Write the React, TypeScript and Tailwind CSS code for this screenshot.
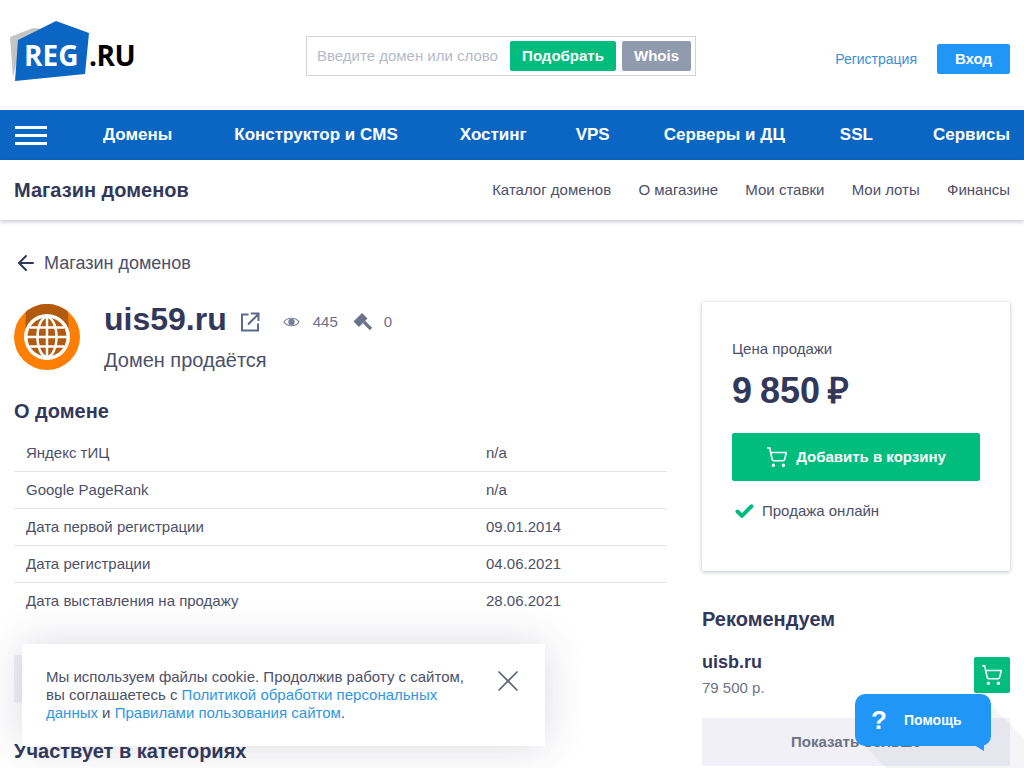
import { ArrowLeft, Check, ShoppingCart, X } from "lucide-react";

const navItems = [
  { label: "Домены", className: "" },
  { label: "Конструктор и CMS", className: "ml-[62px]" },
  { label: "Хостинг", className: "ml-[62px]" },
  { label: "VPS", className: "ml-[49px]" },
  { label: "Серверы и ДЦ", className: "ml-[54px]" },
  { label: "SSL", className: "ml-[55px]" },
  { label: "Сервисы", className: "ml-auto" },
];
const shopLinks = ["Каталог доменов", "О магазине", "Мои ставки", "Мои лоты", "Финансы"];
const facts = [
  ["Яндекс тИЦ", "n/a"],
  ["Google PageRank", "n/a"],
  ["Дата первой регистрации", "09.01.2014"],
  ["Дата регистрации", "04.06.2021"],
  ["Дата выставления на продажу", "28.06.2021"],
];

function Logo() {
  return (
    <div className="relative h-[62px] w-[126px]">
      <svg width="126" height="62" viewBox="0 0 126 62" className="absolute left-0 top-0">
        <path d="M0 17 L23 8 L33 9 L10 30 L3 57 Z" fill="#c4c4c4" />
        <path d="M5 61 L8 20 L46 1 L79 13 L75 54 Z" fill="#0a66c2" />
      </svg>
      <span className="absolute left-[14px] top-[17px] font-['Open_Sans',sans-serif] text-[28px] font-bold leading-[36px] text-white">
        REG
      </span>
      <span className="absolute left-[79px] top-[17px] font-['Open_Sans',sans-serif] text-[28px] font-bold leading-[36px] tracking-[-0.5px] text-black">
        .RU
      </span>
    </div>
  );
}

function GlobeBadge() {
  return (
    <svg width="66" height="66" viewBox="0 0 66 66" className="shrink-0">
      <circle cx="33" cy="33" r="33" fill="#fc7f03" />
      <path d="M12 7.5 A33 33 0 0 1 54 7.5 L55 33 L11 33 Z" fill="#b25b10" />
      <circle cx="33" cy="33" r="23" fill="#fff" />
      <circle cx="33" cy="33" r="19.5" fill="#b25b10" />
      <g fill="none" stroke="#fff" strokeWidth="2.5">
        <ellipse cx="33" cy="33" rx="9.5" ry="20" />
        <path d="M33 13 V53 M13 33 H53 M16 23.5 H50 M16 42.5 H50" />
      </g>
    </svg>
  );
}

function ExternalIcon() {
  return (
    <svg width="20" height="20" viewBox="0 0 20 20" fill="none" stroke="#5a6a8c" strokeWidth="2" className="ml-[13px] mt-[4px]">
      <path d="M8.5 2.5 H2 V18.5 H18 V11.5" />
      <path d="M8 12.5 L18 2.5 M11 1.5 H18.5 V9" />
    </svg>
  );
}

function EyeIcon() {
  return (
    <svg width="17" height="12" viewBox="0 0 17 12" className="ml-[23px] mt-[4px]">
      <path d="M1 6 C4 1 13 1 16 6 C13 11 4 11 1 6 Z" fill="none" stroke="#7a8096" strokeWidth="1.2" />
      <circle cx="8.5" cy="6" r="3.2" fill="#7a8096" />
    </svg>
  );
}

function GavelIcon() {
  return (
    <svg width="20" height="20" viewBox="0 0 20 20" className="ml-[15px] mt-[4px]">
      <path d="M0.5 9.5 L9 1 L14.5 6.5 L6 15 Z" fill="#6c7288" />
      <path d="M11 10 L18 17" stroke="#6c7288" strokeWidth="3.2" />
    </svg>
  );
}

export default function App() {
  return (
    <div className="relative h-screen overflow-hidden bg-white font-['Liberation_Sans',sans-serif] text-[#33385a]">
      <header className="flex h-[110px] items-center pl-[10px] pr-[14px]">
        <div className="mt-[-8px]">
          <Logo />
        </div>
        <div className="ml-[170px] mt-[2px] flex h-10 w-[390px] items-center border border-[#d0d3da] pl-[10px] pr-1">
          <span className="flex-1 text-[15px] text-[#b5bac8]">Введите домен или слово</span>
          <button className="h-[30px] w-[106px] rounded-[2px] bg-[#00bd7d] text-[15px] font-bold text-white">Подобрать</button>
          <button className="ml-[6px] h-[30px] w-[69px] rounded-[2px] bg-[#919bb0] text-[15px] font-bold text-white">Whois</button>
        </div>
        <a className="ml-auto mt-[8px] text-sm text-[#3b8fd8]">Регистрация</a>
        <button className="ml-5 mt-[8px] h-[30px] w-[73px] rounded-[2px] bg-[#2096f7] text-[15px] font-bold text-white">Вход</button>
      </header>

      <nav className="flex h-[50px] items-center bg-[#0a66c2] pl-[15px] pr-[14px] text-white">
        <div className="flex w-8 flex-col gap-[5px]">
          <span className="h-[3px] bg-white" />
          <span className="h-[3px] bg-white" />
          <span className="h-[3px] bg-white" />
        </div>
        <ul className="ml-[56px] flex flex-1 text-[17px] font-bold">
          {navItems.map((item) => (
            <li key={item.label} className={item.className}>
              {item.label}
            </li>
          ))}
        </ul>
      </nav>

      <div className="flex h-[60px] items-center justify-between px-[14px] shadow-[0_2px_4px_rgba(51,56,90,0.25)]">
        <h2 className="text-xl font-bold">Магазин доменов</h2>
        <ul className="flex gap-[27.25px] text-[15px] text-[#4c5068]">
          {shopLinks.map((link) => (
            <li key={link}>{link}</li>
          ))}
        </ul>
      </div>

      <main className="flex gap-[35px] pl-[14px] pr-[14px]">
        <section className="w-[653px] shrink-0">
          <a className="mt-[31px] flex h-6 items-center text-lg text-[#4c5068]">
            <ArrowLeft size={24} strokeWidth={2} className="mr-[6px] text-[#33385a]" />
            Магазин доменов
          </a>

          <div className="mt-[29px] flex">
            <GlobeBadge />
            <div className="ml-[24px]">
              <div className="flex h-[32px] items-center">
                <h1 className="mt-[-2px] text-[32px] font-bold leading-[32px]">uis59.ru</h1>
                <ExternalIcon />
                <EyeIcon />
                <span className="ml-[13px] mt-[4px] text-[15px] text-[#6c7288]">445</span>
                <GavelIcon />
                <span className="ml-[11px] mt-[4px] text-[15px] text-[#6c7288]">0</span>
              </div>
              <p className="mt-[12px] text-xl leading-6 text-[#4c5068]">Домен продаётся</p>
            </div>
          </div>

          <h3 className="mt-[25px] text-xl font-bold leading-7">О домене</h3>
          <div className="mt-[10px] text-[15px] text-[#4c5068]">
            {facts.map(([name, value]) => (
              <div key={name} className="flex h-[37px] items-center border-b border-[#e2e4ea] pl-3 last:border-0">
                <span className="w-[460px]">{name}</span>
                <span>{value}</span>
              </div>
            ))}
          </div>

          <div className="mt-[35px] h-12 w-[300px] rounded-[2px] bg-[#f0f0f6]" />
          <h3 className="mt-[34px] text-xl font-bold leading-7">Участвует в категориях</h3>
        </section>

        <aside className="w-[308px] shrink-0">
          <div className="mt-[82px] h-[269px] rounded-[2px] px-[30px] pt-[37px] shadow-[0_1px_4px_rgba(51,56,90,0.3)]">
            <p className="text-[15px] leading-5 text-[#4c5068]">Цена продажи</p>
            <p className="mt-[11px] text-4xl font-bold leading-[42px] [word-spacing:-2px]">9 850 ₽</p>
            <button className="mt-[21px] flex h-12 w-full items-center justify-center gap-2 rounded-[2px] bg-[#00bd7d] text-[15px] font-bold text-white">
              <ShoppingCart size={22} strokeWidth={1.75} />
              Добавить в корзину
            </button>
            <div className="mt-[20px] flex h-5 items-center pl-[2px] text-[15px] text-[#4c5068]">
              <Check size={21} strokeWidth={4.5} className="mr-[7px] text-[#00bd7d]" />
              Продажа онлайн
            </div>
          </div>

          <h3 className="mt-[34px] text-xl font-bold leading-7">Рекомендуем</h3>
          <div className="mt-[17px] flex h-[54px] items-start justify-between">
            <div>
              <p className="text-lg font-bold leading-6">uisb.ru</p>
              <p className="mt-[4px] text-[15px] leading-5 text-[#6c7288]">79 500 р.</p>
            </div>
            <button className="mt-[7px] flex h-9 w-9 items-center justify-center rounded-[2px] bg-[#00bd7d] text-white">
              <ShoppingCart size={22} strokeWidth={1.75} />
            </button>
          </div>
          <button className="mt-[14px] h-12 w-full rounded-[2px] bg-[#f0f0f6] text-[15px] font-bold text-[#6c7288]">
            Показать больше
          </button>
        </aside>
      </main>

      <div className="absolute left-[22px] top-[644px] flex h-[102px] w-[523px] bg-white pl-6 pt-[24px] text-[15px] leading-[18px] text-[#4c5068] shadow-[0_0_40px_rgba(51,56,90,0.18)]">
        <p className="w-[430px]">
          Мы используем файлы cookie. Продолжив работу с сайтом, вы соглашаетесь с{" "}
          <a className="text-[#2f96e6]">Политикой обработки персональных данных</a> и{" "}
          <a className="text-[#2f96e6]">Правилами пользования сайтом</a>.
        </p>
        <X size={36} strokeWidth={1.1} className="ml-[14px] mt-[-5px] text-[#5c6278]" />
      </div>

      <svg width="170" height="80" viewBox="0 0 170 80" className="absolute left-[854px] top-[688px]">
        <path d="M137 17 L170 50 L170 80 L32 80 L11 58 Z" fill="#33385a" opacity="0.05" />
      </svg>
      <div className="absolute left-[855px] top-[694px] flex h-[52px] w-[136px] items-center rounded-[10px] bg-[#2096f7] pl-4 font-bold text-white">
        <span className="w-[33px] text-[26px] leading-none">?</span>
        <span className="text-sm">Помощь</span>
        <svg width="11" height="6" viewBox="0 0 11 6" className="absolute bottom-[-5px] right-[6px]">
          <path d="M0 0 H10 L10 6 Z" fill="#2096f7" />
        </svg>
      </div>
    </div>
  );
}
